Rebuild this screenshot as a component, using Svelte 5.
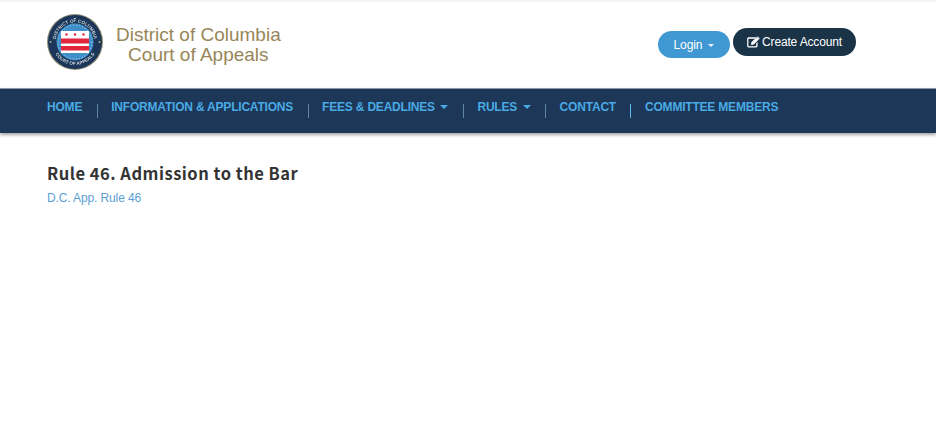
<div class="page">
  <header class="top">
    <div class="brand">
      <svg class="seal" viewBox="0 0 56 56" width="56" height="56" aria-hidden="true">
        <defs>
          <path id="arcTop" d="M8.500 28a19.500 19.500 0 0 1 39 0" />
          <path id="arcBottom" d="M5 28a23 23 0 0 0 46 0" />
        </defs>
        <circle cx="28" cy="28" r="28" fill="#8f8a72" />
        <circle cx="28" cy="28" r="27" fill="#1b3658" />
        <text class="ring"><textPath href="#arcTop" startOffset="50%" text-anchor="middle">DISTRICT OF COLUMBIA</textPath></text>
        <text class="ring"><textPath href="#arcBottom" startOffset="50%" text-anchor="middle">COURT OF APPEALS</textPath></text>
        <circle cx="28" cy="28" r="18.500" fill="#3f8fc9" />
        <circle cx="28" cy="28" r="17" fill="none" stroke="#bcd6e8" stroke-width="1" stroke-dasharray="1 2.100" />
        <circle cx="3.500" cy="28" r="1" fill="#b8ad88" />
        <circle cx="52.500" cy="28" r="1" fill="#b8ad88" />
        <rect x="14" y="17" width="28" height="22" fill="#fff" />
        <rect x="14" y="24.500" width="28" height="5" fill="#e2263c" />
        <rect x="14" y="32" width="28" height="4.500" fill="#e2263c" />
        <circle cx="19.500" cy="20.500" r="1.200" fill="#e2263c" />
        <circle cx="28" cy="20.500" r="1.200" fill="#e2263c" />
        <circle cx="36.500" cy="20.500" r="1.200" fill="#e2263c" />
      </svg>
      <div class="title">District of Columbia<br />Court of Appeals</div>
    </div>
    <div class="actions">
      <button class="btn login">Login <span class="caret white"></span></button>
      <button class="btn create">
        <svg viewBox="0 0 16 14" width="13" height="12" aria-hidden="true">
          <path d="M2 1.200h9.200L9.600 2.900H2.300c-.4 0-.6.2-.6.6v8.200c0 .4.2.6.6.6h8.400c.4 0 .6-.2.6-.6V8.600L13 7v5c0 1-.8 1.800-1.800 1.800H2C1 13.800.2 13 .2 12V3C.2 2 1 1.200 2 1.200z" fill="#fff" />
          <path d="M5.400 7.300 12 .8l2.800 2.800-6.500 6.600-3.300.5z" fill="#fff" />
          <path d="M13 .0l2.800 2.800-.7.8-2.800-2.800z" fill="#fff" />
        </svg>
        Create Account
      </button>
    </div>
  </header>
  <nav class="nav">
    {#each items as item, i}
      {#if i > 0}<span class="sep" class:bright={item.bright}></span>{/if}
      <a class="link" href="#top">{item.label}{#if item.caret}<span class="caret"></span>{/if}</a>
    {/each}
  </nav>
  <main class="content">
    <h1>Rule 46. Admission to the Bar</h1>
    <a class="cite" href="#top">D.C. App. Rule 46</a>
  </main>
</div>

<script>
  const items = [
    { label: 'HOME' },
    { label: 'INFORMATION & APPLICATIONS' },
    { label: 'FEES & DEADLINES', caret: true },
    { label: 'RULES', caret: true },
    { label: 'CONTACT' },
    { label: 'COMMITTEE MEMBERS', bright: true }
  ];
</script>

<style>
  :global(body) {
    margin: 0;
    background: #fff;
    font-family: "Liberation Sans", Arial, sans-serif;
  }
  .page {
    height: 441px;
    overflow: hidden;
    border-top: 2px solid #f4f4f4;
    box-sizing: border-box;
  }
  .top {
    height: 86px;
    display: flex;
    justify-content: space-between;
    padding: 0 80px 0 47px;
    box-sizing: border-box;
  }
  .brand {
    display: flex;
    align-items: flex-start;
    padding-top: 12px;
    gap: 13px;
  }
  .seal {
    display: block;
    filter: blur(0.4px);
  }
  .ring {
    font: bold 4.600px "Liberation Sans", sans-serif;
    fill: #c9d3dc;
  }
  .title {
    margin-top: 11px;
    color: #978658;
    font-size: 19px;
    line-height: 20px;
    text-align: center;
  }
  .actions {
    display: flex;
    align-items: flex-start;
    gap: 3px;
    padding-top: 26px;
  }
  .btn {
    border: 0;
    color: #fff;
    font-family: inherit;
    font-size: 12px;
    letter-spacing: -0.15px;
    border-radius: 14px;
    padding: 0;
  }
  .login {
    width: 72px;
    height: 27px;
    margin-top: 3px;
    background: #4098d2;
  }
  .create {
    width: 123px;
    height: 28px;
    background: #1a3347;
    display: flex;
    align-items: center;
    justify-content: center;
    gap: 2px;
  }
  .caret {
    display: inline-block;
    margin-left: 5.500px;
    vertical-align: 2px;
    border-top: 4px solid #4aaae4;
    border-left: 4px solid transparent;
    border-right: 4px solid transparent;
  }
  .caret.white {
    margin-left: 3px;
    border-top-color: #e8f2fa;
    border-width: 3.500px 3.500px 0;
  }
  .nav {
    height: 45px;
    background: #1c3757;
    border-top: 1px solid #8d99a6;
    box-sizing: border-box;
    box-shadow: 0 2px 3px rgba(0, 0, 0, 0.35);
    display: flex;
    align-items: flex-start;
    padding-left: 47px;
    position: relative;
  }
  .link {
    color: #4aaae4;
    font-size: 12px;
    letter-spacing: -0.2px;
    font-weight: bold;
    line-height: 14px;
    margin-top: 11px;
    text-decoration: none;
    white-space: nowrap;
  }
  .sep {
    width: 1px;
    height: 14px;
    margin: 15px 13.500px 0 14.500px;
    background: #5f87a8;
  }
  .sep.bright {
    background: #5fb6ee;
  }
  .content {
    padding: 29px 47px 0;
  }
  h1 {
    margin: 0;
    color: #333;
    font-family: "Noto Sans CJK KR", "Noto Sans", sans-serif;
    font-size: 16.500px;
    line-height: 22px;
    font-weight: 700;
    letter-spacing: 0.5px;
  }
  .cite {
    display: block;
    margin-top: 7px;
    color: #5b9fd6;
    font-size: 12px;
    letter-spacing: -0.12px;
    line-height: 14px;
    text-decoration: none;
  }
</style>
